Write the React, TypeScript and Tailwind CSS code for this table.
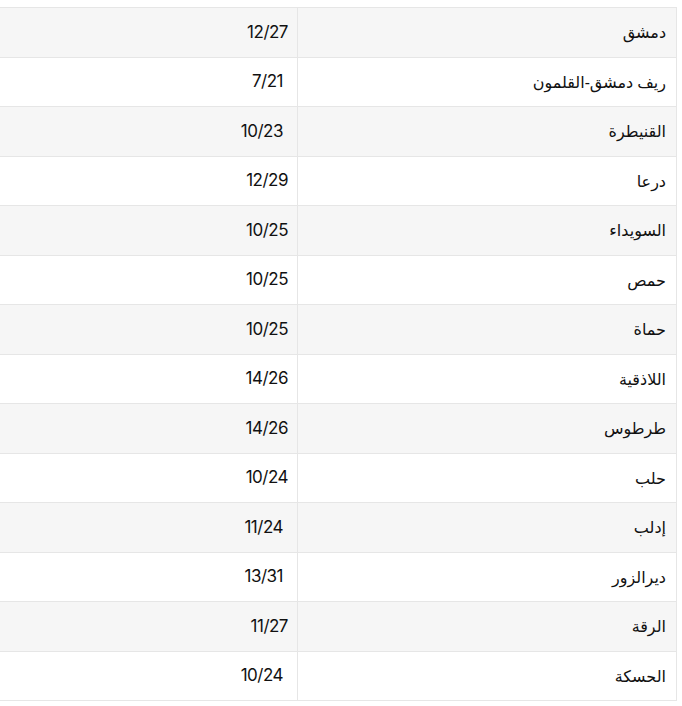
const rows: { city: string; temp: string; extra?: boolean }[] = [
  { city: 'دمشق', temp: '12/27' },
  { city: 'ريف دمشق-القلمون', temp: '7/21', extra: true },
  { city: 'القنيطرة', temp: '10/23', extra: true },
  { city: 'درعا', temp: '12/29' },
  { city: 'السويداء', temp: '10/25' },
  { city: 'حمص', temp: '10/25' },
  { city: 'حماة', temp: '10/25' },
  { city: 'اللاذقية', temp: '14/26' },
  { city: 'طرطوس', temp: '14/26' },
  { city: 'حلب', temp: '10/24' },
  { city: 'إدلب', temp: '11/24', extra: true },
  { city: 'ديرالزور', temp: '13/31', extra: true },
  { city: 'الرقة', temp: '11/27' },
  { city: 'الحسكة', temp: '10/24', extra: true },
];

export default function App() {
  return (
    <div className="min-h-[706px] bg-white pt-[7px] pr-[5px] text-[#111]" dir="rtl">
      <table className="w-full border-collapse">
        <tbody>
          {rows.map((r, i) => (
            <tr
              key={r.city}
              className={`h-[49.5px] border-y border-[#e6e6e6] ${i % 2 === 0 ? 'bg-[#f6f6f6]' : 'bg-white'}`}
            >
              <td
                className="w-[379px] border-x border-[#e6e6e6] pr-[10px] text-right text-[16px]"
                style={{ fontFamily: '"Noto Sans", "DejaVu Sans", sans-serif' }}
              >
                {r.city}
              </td>
              <td
                className={`text-right text-[17px] tracking-[-0.5px] ${r.extra ? 'pr-[14px]' : 'pr-[9px]'}`}
                style={{ fontFamily: 'Inter, sans-serif' }}
              >
                {r.temp}
              </td>
            </tr>
          ))}
        </tbody>
      </table>
    </div>
  );
}
